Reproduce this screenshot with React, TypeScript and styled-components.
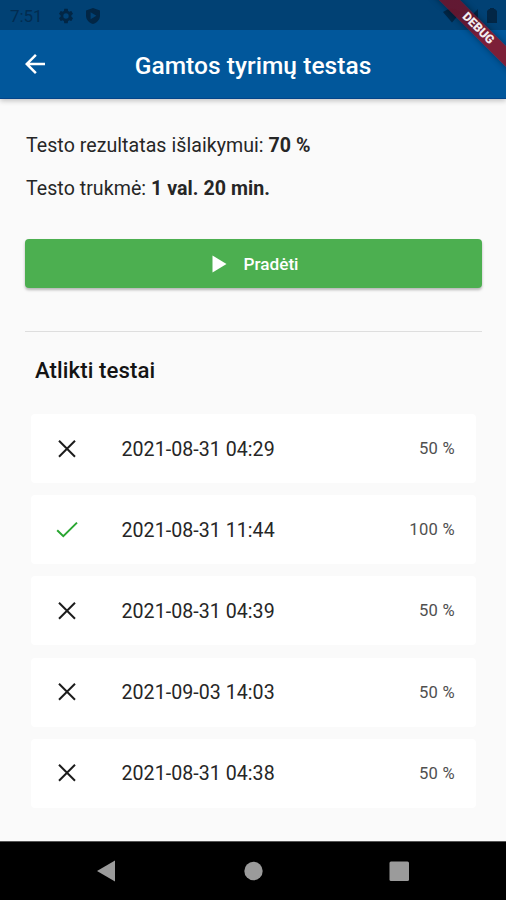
import React from "react";
import styled, { createGlobalStyle } from "styled-components";

const Global = createGlobalStyle`
  *, *::before, *::after { box-sizing: border-box; }
  body { margin: 0; background: #fafafa; }
  button { font: inherit; border: 0; padding: 0; background: none; }
`;

const Screen = styled.div`
  position: relative;
  display: flex;
  flex-direction: column;
  width: 506px;
  height: 900px;
  overflow: hidden;
  background: #fafafa;
  color: #262626;
  font-family: Roboto, "Liberation Sans", sans-serif;
`;

const StatusBar = styled.div`
  position: relative;
  z-index: 3;
  flex: none;
  display: flex;
  align-items: center;
  height: 30px;
  padding: 1px 8px 0 10px;
  background: #014174;
  color: #022645;
`;

const Clock = styled.span`
  width: 47px;
  font-size: 17px;
  line-height: 20px;
  letter-spacing: -0.05px;
  color: #022c50;
`;

const StatusIcons = styled.div`
  display: flex;
  align-items: center;
  gap: 9px;
`;

const Signals = styled.svg`
  margin-left: auto;
  fill: #022645;
`;

const AppBar = styled.header`
  position: relative;
  z-index: 1;
  flex: none;
  display: grid;
  grid-template-columns: 69px 1fr 69px;
  align-items: center;
  height: 69px;
  background: #01579b;
  border-bottom: 1px solid #034489;
  box-shadow: 0 2px 5px rgba(0, 0, 0, 0.22);
  color: #fff;
`;

const BackButton = styled.button`
  display: flex;
  justify-content: center;
  align-items: center;
  color: inherit;
`;

const Title = styled.h1`
  margin: 3px 0 0;
  text-align: center;
  font-size: 24.5px;
  line-height: 30px;
  font-weight: 500;
  letter-spacing: 0.05px;
  white-space: nowrap;
`;

const Ribbon = styled.div`
  position: absolute;
  z-index: 3;
  left: 417.5px;
  top: 21px;
  width: 120px;
  height: 15px;
  transform: rotate(45deg);
  background: linear-gradient(90deg, rgba(105, 22, 46, 0.93) 0 52px, #7c1f38 68px);
  box-shadow: 0 0 6px rgba(0, 0, 0, 0.4);
  color: #f3edf0;
  text-align: center;
  font-size: 12.2px;
  line-height: 15px;
  font-weight: 900;
`;

const Content = styled.main`
  flex: 1;
  display: flex;
  flex-direction: column;
  padding: 35px 24px 0 25px;
`;

const Info = styled.p`
  margin: 0 0 19px 1px;
  font-size: 19.6px;
  line-height: 24px;
  letter-spacing: 0.04px;
  white-space: nowrap;

  strong { font-weight: 700; }
`;

const StartButton = styled.button`
  display: flex;
  align-items: center;
  justify-content: center;
  gap: 16px;
  height: 49px;
  margin-top: 19px;
  padding-left: 4px;
  border-radius: 4px;
  background: #4caf50;
  box-shadow: 0 2px 3px rgba(0, 0, 0, 0.28);
  color: #fff;
  font-size: 17.2px;
  font-weight: 500;
`;

const Divider = styled.hr`
  width: 100%;
  height: 1px;
  margin: 43px 0 0;
  border: 0;
  background: #dedede;
`;

const Heading = styled.h2`
  margin: 23px 0 29px 10px;
  font-size: 22.2px;
  line-height: 30px;
  font-weight: 500;
  letter-spacing: 0.08px;
  color: #141414;
`;

const TestList = styled.ul`
  display: flex;
  flex-direction: column;
  gap: 12.2px;
  margin: 0 6px;
  padding: 0;
  list-style: none;
`;

const TestRow = styled.li`
  display: grid;
  grid-template-columns: 90.5px 1fr auto;
  align-items: center;
  height: 69px;
  padding: 0 21px 0 0;
  border-radius: 4px;
  background: #fff;
`;

const Mark = styled.svg`
  display: block;
  margin-left: 22px;
  fill: none;
`;

const TestDate = styled.span`
  padding-top: 1px;
  font-size: 19.6px;
  letter-spacing: 0.04px;
`;

const Score = styled.span`
  font-size: 16.6px;
  letter-spacing: 0.3px;
  color: #505050;
`;

const NavBar = styled.nav`
  flex: none;
  height: 59px;
  border-top: 1px solid #555;
  background: #000;

  svg { display: block; fill: #9b9b9b; }
`;

const tests = [
  { date: "2021-08-31 04:29", score: "50 %", passed: false },
  { date: "2021-08-31 11:44", score: "100 %", passed: true },
  { date: "2021-08-31 04:39", score: "50 %", passed: false },
  { date: "2021-09-03 14:03", score: "50 %", passed: false },
  { date: "2021-08-31 04:38", score: "50 %", passed: false },
];

function ResultMark({ passed }: { passed: boolean }) {
  return (
    <Mark width="28" height="28" viewBox="0 0 28 28">
      {passed ? (
        <path d="M4.2 14.2 L10.3 20.2 L24 6.6" stroke="#2aa632" strokeWidth="2" />
      ) : (
        <path d="M6 5.7 L22 21.7 M22 5.7 L6 21.7" stroke="#1c1c1c" strokeWidth="2" />
      )}
    </Mark>
  );
}

export default function App() {
  return (
    <>
      <Global />
      <Screen>
        <StatusBar>
          <Clock>7:51</Clock>
          <StatusIcons>
            <svg width="18" height="18" viewBox="0 0 24 24" fill="currentColor">
              <path d="M19.14 12.94c.04-.3.06-.61.06-.94 0-.32-.02-.64-.07-.94l2.03-1.58a.49.49 0 0 0 .12-.61l-1.92-3.32a.488.488 0 0 0-.59-.22l-2.39.96c-.5-.38-1.03-.7-1.62-.94l-.36-2.54a.484.484 0 0 0-.48-.41h-3.84c-.24 0-.43.17-.47.41l-.36 2.54c-.59.24-1.13.57-1.62.94l-2.39-.96c-.22-.08-.47 0-.59.22L2.74 8.87c-.12.21-.08.47.12.61l2.03 1.58c-.05.3-.09.63-.09.94s.02.64.07.94l-2.03 1.58a.49.49 0 0 0-.12.61l1.92 3.32c.12.22.37.29.59.22l2.39-.96c.5.38 1.03.7 1.62.94l.36 2.54c.05.24.24.41.48.41h3.84c.24 0 .44-.17.47-.41l.36-2.54c.59-.24 1.13-.56 1.62-.94l2.39.96c.22.08.47 0 .59-.22l1.92-3.32c.12-.22.07-.47-.12-.61l-2.01-1.58zM12 15.6A3.6 3.6 0 1 1 12 8.4a3.6 3.6 0 0 1 0 7.2z" />
            </svg>
            <svg width="18" height="18" viewBox="0 0 16 18" fill="currentColor" fillRule="evenodd">
              <path d="M8 1 L15 3.6 V8.5 C15 12.7 12 15.8 8 17 C4 15.8 1 12.7 1 8.5 V3.6 Z M5.6 5.2 V12.2 L11.4 8.7 Z" />
            </svg>
          </StatusIcons>
          <Signals width="58" height="20" viewBox="0 0 58 20">
            <path d="M3 6 Q12 -1 21 6 L12 16.5 Z" />
            <path d="M38 3 V17 H24 Z" />
            <path d="M47 5 L49 3 H50 V2 H54 V3 H55 L57 5 V17 H47 Z" />
          </Signals>
        </StatusBar>
        <Ribbon>DEBUG</Ribbon>

        <AppBar>
          <BackButton aria-label="Atgal">
            <svg width="30" height="30" viewBox="0 0 24 24" fill="currentColor">
              <path d="M20 11H7.83l5.59-5.59L12 4l-8 8 8 8 1.41-1.41L7.83 13H20v-2z" />
            </svg>
          </BackButton>
          <Title>Gamtos tyrimų testas</Title>
        </AppBar>

        <Content>
          <Info>
            Testo rezultatas išlaikymui: <strong>70 %</strong>
          </Info>
          <Info>
            Testo trukmė: <strong>1 val. 20 min.</strong>
          </Info>
          <StartButton>
            <svg width="15" height="18" viewBox="0 0 15 18" fill="currentColor">
              <path d="M0.5 0.5 L14.5 9 L0.5 17.5 Z" />
            </svg>
            Pradėti
          </StartButton>
          <Divider />
          <Heading>Atlikti testai</Heading>
          <TestList>
            {tests.map((test) => (
              <TestRow key={test.date}>
                <ResultMark passed={test.passed} />
                <TestDate>{test.date}</TestDate>
                <Score>{test.score}</Score>
              </TestRow>
            ))}
          </TestList>
        </Content>

        <NavBar>
          <svg width="506" height="58" viewBox="0 0 506 58">
            <path d="M97 29 L115 18.5 V39.5 Z" />
            <circle cx="253.5" cy="29" r="9.2" />
            <rect x="389.5" y="19.5" width="19.5" height="19.5" rx="1.5" />
          </svg>
        </NavBar>
      </Screen>
    </>
  );
}
